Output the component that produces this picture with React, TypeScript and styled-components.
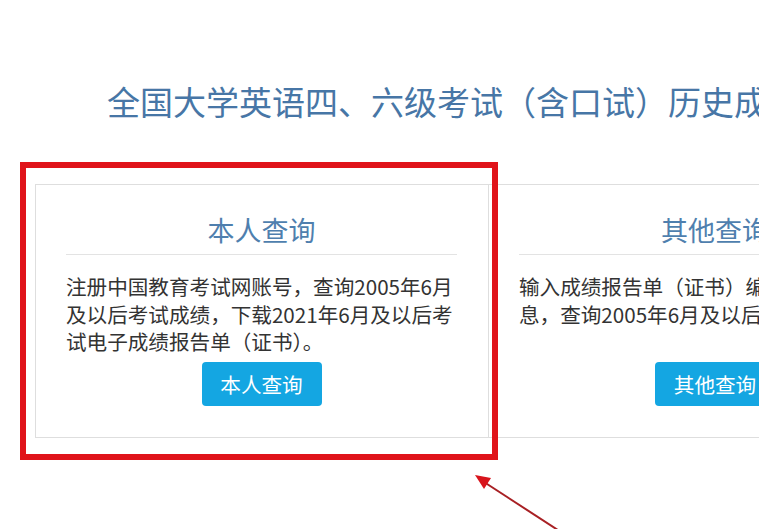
import React from "react";
import styled, { createGlobalStyle } from "styled-components";

const GlobalStyle = createGlobalStyle`
  html, body {
    margin: 0;
    padding: 0;
    background: #fff;
  }
  body {
    font-family: "Noto Sans CJK SC", "Noto Sans", sans-serif;
    color: #333;
  }
`;

const Page = styled.div`
  position: relative;
  width: 759px;
  height: 529px;
  overflow: hidden;
  background: #fff;
`;

const Title = styled.h1`
  margin: 0;
  padding: 80px 0 0 107px;
  font-size: 33px;
  line-height: 42px;
  font-weight: 400;
  color: #4776a6;
  white-space: nowrap;
`;

const CardRow = styled.div`
  display: flex;
  margin-top: 62px;
  padding-left: 35px;
`;

const Card = styled.div<{ $first?: boolean }>`
  flex: 0 0 454px;
  box-sizing: border-box;
  height: 254px;
  display: flex;
  flex-direction: column;
  padding: 25px 31px 31px 30px;
  border: 1px solid #dedede;
  border-left: ${(p) => (p.$first ? "1px solid #dedede" : "none")};
`;

const CardTitle = styled.h2`
  margin: 0 0 4px;
  font-size: 27px;
  line-height: 40px;
  font-weight: 400;
  text-align: center;
  color: #4f7fae;
  white-space: nowrap;
`;

const Rule = styled.hr`
  margin: 0 0 18px;
  border: none;
  border-top: 1px solid #e3e3e3;
`;

const Desc = styled.p`
  margin: 0;
  font-size: 20.6px;
  line-height: 27.5px;
  color: #333;
`;

const QueryButton = styled.button`
  margin: auto auto 0;
  width: 120px;
  height: 44px;
  border: none;
  border-radius: 4px;
  background: #14a6e2;
  color: #fff;
  font-family: inherit;
  font-size: 20.6px;
  cursor: pointer;
`;

const Highlight = styled.div`
  position: absolute;
  left: 20px;
  top: 162px;
  width: 478px;
  height: 298px;
  box-sizing: border-box;
  border: 6.5px solid #e0141a;
  pointer-events: none;
`;

const Arrow = styled.svg`
  position: absolute;
  left: 460px;
  top: 460px;
  pointer-events: none;
`;

const cards = [
  {
    title: "本人查询",
    text:
      "注册中国教育考试网账号，查询2005年6月及以后考试成绩，下载2021年6月及以后考试电子成绩报告单（证书）。",
  },
  {
    title: "其他查询",
    text: "输入成绩报告单（证书）编号、姓名等信息，查询2005年6月及以后考试成绩。",
  },
];

export default function App() {
  return (
    <>
      <GlobalStyle />
      <Page>
        <Title>全国大学英语四、六级考试（含口试）历史成绩查询</Title>
        <CardRow>
          {cards.map((c, i) => (
            <Card key={c.title} $first={i === 0}>
              <CardTitle>{c.title}</CardTitle>
              <Rule />
              <Desc>{c.text}</Desc>
              <QueryButton>{c.title}</QueryButton>
            </Card>
          ))}
        </CardRow>
        <Highlight />
        <Arrow width="120" height="69" viewBox="0 0 120 69">
          <line x1="24" y1="22" x2="104" y2="74" stroke="#a82024" strokeWidth="2" />
          <polygon points="15,15 31,18 24,29" fill="#d8141c" />
        </Arrow>
      </Page>
    </>
  );
}
